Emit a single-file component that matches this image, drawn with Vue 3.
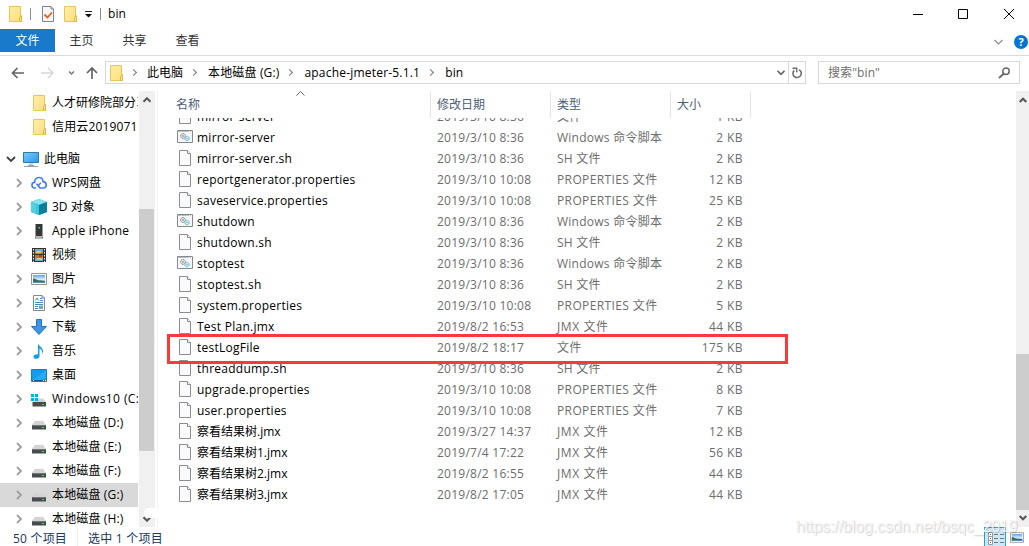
<script setup>
const tree = [
  { icon: 'pc', label: '此电脑', root: true },
  { icon: 'cloud', label: 'WPS网盘' },
  { icon: 'cube', label: '3D 对象' },
  { icon: 'phone', label: 'Apple iPhone' },
  { icon: 'video', label: '视频' },
  { icon: 'picture', label: '图片' },
  { icon: 'doc', label: '文档' },
  { icon: 'down', label: '下载' },
  { icon: 'music', label: '音乐' },
  { icon: 'desk', label: '桌面' },
  { icon: 'windisk', label: 'Windows10 (C:)' },
  { icon: 'disk', label: '本地磁盘 (D:)' },
  { icon: 'disk', label: '本地磁盘 (E:)' },
  { icon: 'disk', label: '本地磁盘 (F:)' },
  { icon: 'disk', label: '本地磁盘 (G:)', selected: true },
  { icon: 'disk', label: '本地磁盘 (H:)' },
]
const rows = [
  ['mirror-server', '2019/3/10 8:36', '文件', '1 KB'],
  ['mirror-server', '2019/3/10 8:36', 'Windows 命令脚本', '2 KB'],
  ['mirror-server.sh', '2019/3/10 8:36', 'SH 文件', '2 KB'],
  ['reportgenerator.properties', '2019/3/10 10:08', 'PROPERTIES 文件', '12 KB'],
  ['saveservice.properties', '2019/3/10 10:08', 'PROPERTIES 文件', '25 KB'],
  ['shutdown', '2019/3/10 8:36', 'Windows 命令脚本', '2 KB'],
  ['shutdown.sh', '2019/3/10 8:36', 'SH 文件', '2 KB'],
  ['stoptest', '2019/3/10 8:36', 'Windows 命令脚本', '2 KB'],
  ['stoptest.sh', '2019/3/10 8:36', 'SH 文件', '2 KB'],
  ['system.properties', '2019/3/10 10:08', 'PROPERTIES 文件', '5 KB'],
  ['Test Plan.jmx', '2019/8/2 16:53', 'JMX 文件', '44 KB'],
  ['testLogFile', '2019/8/2 18:17', '文件', '175 KB'],
  ['threaddump.sh', '2019/3/10 8:36', 'SH 文件', '2 KB'],
  ['upgrade.properties', '2019/3/10 10:08', 'PROPERTIES 文件', '8 KB'],
  ['user.properties', '2019/3/10 10:08', 'PROPERTIES 文件', '7 KB'],
  ['察看结果树.jmx', '2019/3/27 14:37', 'JMX 文件', '12 KB'],
  ['察看结果树1.jmx', '2019/7/4 17:22', 'JMX 文件', '56 KB'],
  ['察看结果树2.jmx', '2019/8/2 16:55', 'JMX 文件', '44 KB'],
  ['察看结果树3.jmx', '2019/8/2 17:05', 'JMX 文件', '44 KB'],
]
const isScript = (r) => r[2].startsWith('Windows')
</script>

<template>
  <svg class="defs" width="0" height="0">
    <defs>
      <linearGradient id="gf" x1="0" y1="0" x2="1" y2="1"><stop offset="0" stop-color="#ffeda6" /><stop offset="1" stop-color="#ffdf7d" /></linearGradient>
      <linearGradient id="gs" x1="0" y1="0" x2="1" y2="1"><stop offset="0" stop-color="#7cc9fb" /><stop offset="1" stop-color="#2599ea" /></linearGradient>
      <linearGradient id="gp" x1="0" y1="0" x2="0" y2="1"><stop offset="0" stop-color="#5aa2ee" /><stop offset=".55" stop-color="#dceefa" /><stop offset="1" stop-color="#3f7e8c" /></linearGradient>
      <symbol id="folder" viewBox="0 0 14 16"><path d="M.5.5h11v9.5l1 1v4.5H.5z" fill="url(#gf)" stroke="#e8c65c" /><path d="M10.5 15.5v-4l2-2v6z" fill="#ffe691" stroke="#dfb640" /></symbol>
      <symbol id="file" viewBox="0 0 12 16"><path d="M.5.5H8.500L11.500 3.500v12H.5z" fill="#f9fafb" stroke="#8b8d90" /><path d="M8.500 .5v3h3" fill="#fff" stroke="#8b8d90" /></symbol>
      <symbol id="script" viewBox="0 0 16 13"><path d="M.5.5h15v12H.5z" fill="#f5f7f8" stroke="#85898d" /><path d="M1 1.500h14" stroke="#b9bec2" /><path d="M12 1.500h1m1 0h1" stroke="#fff" /><circle cx="6" cy="6" r="2.400" fill="#e8e8e8" stroke="#777" stroke-dasharray="1.200 .5" /><circle cx="6" cy="6" r=".8" fill="#777" /><circle cx="10" cy="8.500" r="2.200" fill="#d8f0fa" stroke="#58a6c8" stroke-dasharray="1.200 .5" /><circle cx="10" cy="8.500" r=".7" fill="#58a6c8" /></symbol>
      <symbol id="pc" viewBox="0 0 16 16"><path d="M.5 1.500h15v10H.5z" fill="url(#gs)" stroke="#2b7da9" /><path d="M5 14.500h6M1 15.500h14" stroke="#8aa5b5" /><path d="M6 12h4v2H6z" fill="#c7dbe6" /></symbol>
      <symbol id="cloud" viewBox="0 0 16 16"><path d="M5 13H3.800C-.1 12.600.1 7.700 3.600 7.400 3.900 1 11.600 1 12 6.600c4.300.3 4.300 6.300.2 6.400H9L5.600 8.800M9 13l-1.800-2.300 2.600-2.900" fill="none" stroke="#3f7df0" stroke-width="1.600" /></symbol>
      <symbol id="cube" viewBox="0 0 16 16"><path d="M8 0l8 3v10l-8 3-8-3V3z" fill="#0fa5bf" /><path d="M0 3l8-3 8 3-8 3z" fill="#85e3ed" /><path d="M5 5v10l3 1V6z" fill="#36c8db" /><path d="M8 6l8-3v10l-8 3z" fill="#087f9d" /><path d="M0 3l5 2v10l-5-2z" fill="#56cee0" /></symbol>
      <symbol id="phone" viewBox="0 0 16 16"><path d="M4.500 1h7v12h-7z" fill="#35383a" /><path d="M4 13.500h8v2H4z" fill="#686c70" /><path d="M5 14.500h6" stroke="#b5b8ba" /><path d="M7.500 4h1.500v1.500H7.500z" fill="#42ed45" /></symbol>
      <symbol id="video" viewBox="0 0 16 16"><path d="M1 1h14v14H1z" fill="#343434" /><path d="M4 1h8v14H4z" fill="#6caae0" /><path d="M4 5l3 2 5-2v5l-3 3-5-3z" fill="#b47a2c" /><path d="M5 4h5v2H5zm1 7h5v2H6z" fill="#e7c84c" /><path d="M8 7h3v3H8z" fill="#b63435" /><path d="M2.500 2v13M13.500 2v13" stroke="#f2f2f2" stroke-dasharray="1.500 1.500" /><path d="M4 1.500h8M4 7.500h8M4 14.500h8" stroke="#333" /></symbol>
      <symbol id="picture" viewBox="0 0 16 12"><path d="M.5.5h15v11H.5z" fill="#fff" stroke="#969696" /><path d="M2 2h12v8H2z" fill="url(#gp)" /><path d="M2 5.500c3 0 4 2 7 2s3 .5 5 .5V10H2z" fill="#347557" /><path d="M2 9h12v1H2z" fill="#5797b8" /></symbol>
      <symbol id="doc" viewBox="0 0 14 16"><path d="M1.500.5H10L12.500 3v12.500h-11z" fill="#fff" stroke="#85888a" /><path d="M10 .5V3h2.500" fill="none" stroke="#85888a" /><path d="M3.500 5.500L5 3l1.500 2.500M8 3.500h2M8 5.500h3M3 7.500h8M3 9.500h8M3 11.500h3M3 13.500h3" fill="none" stroke="#3892cd" /><path d="M7 10.500h4V14H7z" fill="#79aaa6" /></symbol>
      <symbol id="down" viewBox="0 0 16 16"><path d="M5.500.5h5v7h5L8 15.500.5 7.500h5z" fill="#3c94e3" stroke="#1f75c6" /></symbol>
      <symbol id="music" viewBox="0 0 16 16"><path d="M7 .5c.5 3 5.500 3.500 5 8.500-.3 1-.7 1.700-1 2 .8-3.400-1-5-2.500-5.500v7.700c0 3-6 3.700-6 .8 0-2 2.500-3 4.500-2.500z" fill="#119df5" /></symbol>
      <symbol id="desk" viewBox="0 0 16 13"><path d="M.5.5h15v12H.5z" fill="#1699f0" stroke="#147dc4" /><path d="M15 1v8L8 12H1z" fill="#25acfc" /><path d="M1 11.500h14" stroke="#075a9c" /><path d="M2 11.500h1m9 0h1m1 0h1" stroke="#fff" /></symbol>
      <symbol id="disk" viewBox="0 0 14 9"><path d="M3 0h8l3 4H0z" fill="#d1d3d4" /><path d="M0 4h14v4.500H0z" fill="#494c4d" /><path d="M.5 4.500h13" stroke="#777b7d" /><path d="M10 6h2v1h-2z" fill="#36eb44" /></symbol>
      <symbol id="windisk" viewBox="0 0 16 13"><path d="M5 4.500h7l3 3.500H1.500z" fill="#d1d3d4" /><path d="M0 0h3v3H0zm4 0h3v3H4zM0 4h3v3H0zm4 0h3v3H4z" fill="#00adef" /><path d="M1.500 8H15v4.500H1.500z" fill="#494c4d" /><path d="M11 10h2v1h-2z" fill="#36eb44" /></symbol>
    </defs>
  </svg>

  <div class="window">
    <header class="title">
      <svg class="f1" width="14" height="16"><use href="#folder" /></svg>
      <i class="bar b1" />
      <svg class="chk" width="12" height="16" viewBox="0 0 12 16"><path d="M.5.5H9L11.500 3v12.500H.5z" fill="#f5f6f8" stroke="#7e8790" /><path d="M9 .5V3h2.500" fill="none" stroke="#7e8790" /><path d="M2.500 8.500l3 3L10 6.500" fill="none" stroke="#ed5a1e" stroke-width="1.800" /></svg>
      <svg class="f2" width="14" height="16"><use href="#folder" /></svg>
      <svg class="qa" width="7" height="7" viewBox="0 0 7 7"><path d="M0 .5h7" stroke="#222" /><path d="M0 3h7L3.500 6.500z" fill="#111" /></svg>
      <i class="bar b2" />
      <span class="name">bin</span>
      <svg class="controls" width="112" height="12" viewBox="0 0 112 12" fill="none" stroke="#000"><path d="M0 6.500h10M45.500 1.500h9v9h-9zM91 1l10 10M101 1L91 11" /></svg>
    </header>
    <nav class="tabs">
      <span class="active">文件</span><span>主页</span><span>共享</span><span>查看</span>
      <svg class="expand" width="9" height="6" viewBox="0 0 9 6"><path d="M.5 1l4 4 4-4" fill="none" stroke="#8d8d8d" stroke-width="1.200" /></svg>
      <b class="help">?</b>
    </nav>
    <div class="address">
      <svg class="arrows" width="90" height="14" viewBox="0 0 90 14" fill="none"><path d="M6.500 2L1.500 7l5 5M2 7h11" stroke="#646464" stroke-width="1.700" /><path d="M37 2l5 5-5 5M42 7H30" stroke="#d8d8d8" stroke-width="1.500" /><path d="M58 5.500l2.500 2.500L63 5.500" stroke="#777" stroke-width="1.500" /><path d="M76 7l5-5 5 5M81 2.500V13" stroke="#646464" stroke-width="1.700" /></svg>
      <div class="path">
        <svg width="14" height="16"><use href="#folder" /></svg>
        <em /><span class="p1">此电脑</span><em /><span class="p2">本地磁盘 (G:)</span><em /><span class="p3">apache-jmeter-5.1.1</span><em /><span class="p4">bin</span>
        <svg class="drop" width="8" height="6" viewBox="0 0 8 6"><path d="M.5.8L4 4.300 7.500.8" fill="none" stroke="#686868" stroke-width="1.700" /></svg>
        <div class="refresh"><svg width="12" height="12" viewBox="0 0 12 12"><path d="M8 2.600A4.200 4.200 0 1 1 3.200 3.300" fill="none" stroke="#707070" stroke-width="1.600" /><path d="M1.500 1.300h4.200v4" fill="none" stroke="#707070" stroke-width="1.500" /></svg></div>
      </div>
      <div class="search"><span>搜索"bin"</span><svg width="13" height="12" viewBox="0 0 13 12" fill="none" stroke="#686868"><circle cx="8" cy="4.200" r="3.200" stroke-width="1.500" /><path d="M5.700 6.700L1 11" stroke-width="1.900" /></svg></div>
    </div>

    <main class="body">
      <aside class="side">
        <div class="tree">
          <div class="node fav"><svg width="14" height="16"><use href="#folder" /></svg><span class="long">人才研修院部分习</span></div>
          <div class="node fav"><svg width="14" height="16"><use href="#folder" /></svg><span class="digits">信用云2019071</span></div>
          <div v-for="n in tree" :key="n.label" class="node" :class="{ root: n.root, selected: n.selected }">
            <svg class="chev" width="10" height="10" viewBox="0 0 10 10"><path :d="n.root ? 'M1 3l4 4 4-4' : 'M3 1l4 4-4 4'" fill="none" :stroke="n.root ? '#404040' : '#a0a0a0'" stroke-width="1.800" /></svg>
            <svg class="ico" :class="n.icon"><use :href="'#' + n.icon" /></svg>
            <span :class="'t-' + n.icon">{{ n.label }}</span>
          </div>
        </div>
        <div class="scroll left">
          <svg width="10" height="6" viewBox="0 0 10 6"><path d="M1.500 4.800L5 1.300l3.500 3.500" fill="none" stroke="#555" stroke-width="2" /></svg>
          <div class="thumb" />
          <svg width="10" height="6" viewBox="0 0 10 6"><path d="M1.500 1.200L5 4.700l3.500-3.500" fill="none" stroke="#555" stroke-width="2" /></svg>
          <i class="smudge" />
        </div>
      </aside>
      <section class="files">
        <div class="head">
          <span class="c1">名称<svg width="9" height="5" viewBox="0 0 9 5"><path d="M.5 4.500l4-4 4 4" fill="none" stroke="#666" /></svg></span><span>修改日期</span><span>类型</span><span class="c4">大小</span>
        </div>
        <div class="list">
          <div v-for="(r, i) in rows" :key="i" class="row">
            <div class="fn"><svg v-if="isScript(r)" class="script" width="16" height="13"><use href="#script" /></svg><svg v-else class="file" width="12" height="16"><use href="#file" /></svg><span :class="{ han: r[0].startsWith('察') }">{{ r[0] }}</span></div>
            <span class="date">{{ r[1] }}</span><span class="type" :class="{ prop: r[2].startsWith('PROP'), jmx: r[2].startsWith('JMX') }">{{ r[2] }}</span><span class="size">{{ r[3] }}</span>
          </div>
        </div>
        <div class="mark" />
      </section>
      <div class="scroll right">
        <svg width="8" height="6" viewBox="0 0 8 6"><path d="M.7 5L4 1.700 7.300 5" fill="none" stroke="#555" stroke-width="2" /></svg>
        <div class="thumb" />
        <svg width="8" height="6" viewBox="0 0 8 6"><path d="M.7 1L4 4.300 7.300 1" fill="none" stroke="#555" stroke-width="2" /></svg>
      </div>
    </main>
    <footer class="status">
      <span class="s1">50 个项目</span><span class="s2">选中 1 个项目</span>
      <div class="view"><svg width="17" height="14" viewBox="0 0 17 14"><path d="M.5.5h4v12h-4zM.5 4.500h4M.5 8.500h4" fill="#fff" stroke="#999" /><path d="M2 2.500h1" stroke="#2d9c57" /><path d="M2 6.500h1" stroke="#2b7fd0" /><path d="M2 10.500h1" stroke="#d22" /><path d="M6 2.500h4m2 0h4M6 6.500h4m2 0h4M6 10.500h4m2 0h4" stroke="#777" /></svg></div>
      <svg class="large" width="14" height="11"><use href="#picture" width="14" height="11" /></svg>
    </footer>
    <div class="watermark">https://blog.csdn.net/bsqc_2019</div>
  </div>
</template>

<style>
body { margin: 0; overflow: hidden; background: #fff; }
</style>
<style scoped>
* { box-sizing: border-box; }
svg { flex: none; display: block; }
.defs { position: absolute; }
.window { position: relative; width: 1029px; height: 546px; overflow: hidden; display: flex; flex-direction: column; background: #fff; color: #000; font: 12px/20px "Open Sans", "Noto Sans CJK SC", sans-serif; white-space: nowrap; }
.title { height: 29px; display: flex; align-items: center; padding: 0 14px 2px 9px; }
.bar { width: 1px; height: 12px; background: #8c8c8c; }
.b1 { margin: 0 11px 0 7px; }
.f2 { margin-left: 10px; }
.chk { margin-top: 1px; }
.qa { margin: 2px 8px 0 7px; }
.name { margin-left: 7px; font-size: 12px; letter-spacing: .1px; }
.controls { margin-left: auto; margin-right: -10px; }
.tabs { height: 27px; border-bottom: 1px solid #dadbdc; display: flex; align-items: flex-start; color: #333; line-height: 24px; }
.tabs span { width: 53px; text-align: center; }
.tabs .active { width: 55px; background: #1979ca; color: #fff; height: 23px; }
.expand { margin: 10px 11px 0 auto; }
.help { width: 14px; height: 14px; margin: 6px 1px 0 0; border-radius: 50%; background: #0874d1; color: #fff; font-size: 11px; line-height: 14px; text-align: center; }
.address { height: 35px; display: flex; padding: 5px 9px 7px 11px; align-items: center; }
.arrows { margin-right: 4px; }
.path { width: 701px; height: 23px; border: 1px solid #d9d9d9; display: flex; align-items: center; padding-left: 4px; }
.path em { width: 5px; height: 5px; border: solid #777; border-width: 1.500px 1.500px 0 0; transform: rotate(45deg); margin: 0 11px 0 7px; }
.path span + em { margin-left: 8px; margin-right: 12px; }
.p2 { letter-spacing: .15px; }
.p3 { letter-spacing: .2px; }
.p4 { letter-spacing: .1px; }
.drop { margin-left: auto; margin-right: 3px; }
.refresh { height: 21px; width: 17px; border-left: 1px solid #d9d9d9; display: grid; place-items: center; }
.search { width: 202px; height: 23px; margin-left: 12px; border: 1px solid #d9d9d9; display: flex; align-items: center; justify-content: space-between; padding: 0 8px 0 9px; color: #6d6d6d; letter-spacing: .1px; }
.body { height: 436px; display: flex; }
.side { width: 158px; display: flex; border-right: 1px solid #f3f3f3; }
.tree { width: 139px; overflow: hidden; padding-right: 1px; }
.node { height: 24px; display: flex; align-items: center; padding-left: 14px; overflow: hidden; }
.node.fav { padding-left: 33px; }
.node.fav span { margin-left: 5px; }
.digits { letter-spacing: .15px; }
.t-phone { letter-spacing: .27px; }
.t-windisk { letter-spacing: .4px; }
.t-disk { letter-spacing: .15px; }
.node.root { padding-left: 6px; margin-top: 8px; }
.node.selected { background: #d9d9d9; }
.ico { width: 16px; height: 16px; margin: 0 5px 0 7px; }
.picture { height: 12px; }
.desk { height: 13px; }
.doc { width: 14px; margin: 0 6px 0 8px; }
.disk { width: 14px; height: 9px; margin: 4px 6px 0 8px; }
.windisk { height: 13px; margin-top: 3px; }
.scroll { background: #f0f0f0; display: flex; flex-direction: column; align-items: center; }
.scroll .thumb { background: #cdcdcd; width: 100%; }
.left { position: relative; width: 16px; padding: 6px 0 5px; }
.left .thumb { height: 242px; margin: 106px 0 auto; width: 15px; align-self: flex-start; }
.smudge { position: absolute; left: 5px; top: 417px; width: 16px; height: 10px; border-radius: 5px; background: #fff; }
.files { position: relative; width: 858px; }
.head { height: 27px; display: flex; color: #4c607a; }
.head span { width: 120px; border-right: 1px solid #e5e5e5; padding: 4px 0 0 6px; }
.head .c1 { width: 273px; padding-left: 18px; position: relative; }
.head .c4 { width: 80px; }
.c1 svg { position: absolute; left: 138px; top: 0; }
.list { height: 409px; overflow: hidden; }
.row { height: 21px; display: flex; line-height: 21px; color: #6d6d6d; letter-spacing: .25px; }
.row:first-child { margin-top: -12px; }
.fn { width: 279px; padding-left: 21px; display: flex; align-items: center; color: #000; }
.han { letter-spacing: 0; }
.file { margin: 0 6px 1px 0; }
.script { margin: 0 4px 2px -2px; }
.date { width: 120px; }
.type { width: 120px; }
.prop { letter-spacing: .38px; }
.jmx { letter-spacing: .6px; }
.size { width: 66px; text-align: right; letter-spacing: .4px; }
.mark { position: absolute; left: 9px; top: 243px; width: 621px; height: 30px; border: 3px solid #f93a3a; }
.right { width: 13px; padding: 6px 0 6px; }
.right .thumb { height: 156px; margin: 251px 0 auto; }
.status { height: 19px; display: flex; color: #20365c; padding-left: 13px; line-height: 23px; }
.s1 { width: 65px; border-right: 1px solid #f0f0f0; margin-right: 10px; letter-spacing: .2px; }
.s2 { letter-spacing: .25px; }
.view { width: 22px; height: 20px; margin-left: auto; margin-right: 4px; background: #cce8f6; border: 1px solid #26a0da; display: flex; padding: 4px 0 0 3px; }
.large { margin: 5px 5px 0 0; }
.watermark { position: absolute; left: 796px; top: 517px; font: 15.700px/20px "Liberation Sans", Arial, sans-serif; color: rgba(255,255,255,.85); text-shadow: 1px 1px 1px rgba(0,0,0,.17), 0 0 1px rgba(0,0,0,.12); }
</style>
